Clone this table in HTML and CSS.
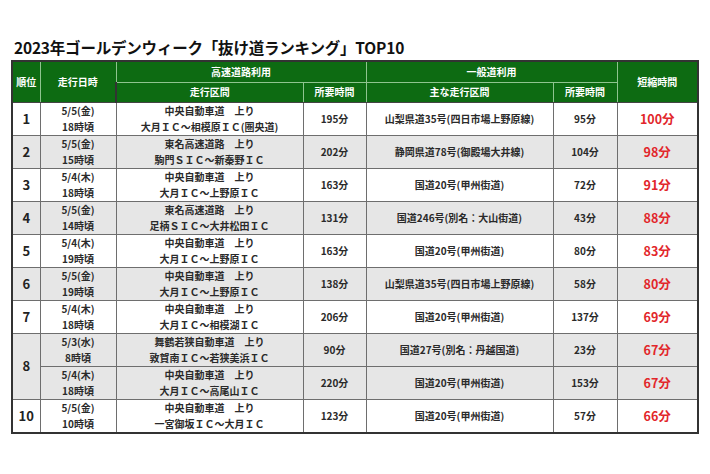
FILE: index.html
```html
<!DOCTYPE html>
<html lang="ja">
<head>
<meta charset="utf-8">
<title>2023年ゴールデンウィーク「抜け道ランキング」TOP10</title>
<link rel="stylesheet" href="styles.css">
</head>
<body>
<div class="page">
  <h1 class="title">2023年ゴールデンウィーク「抜け道ランキング」TOP10</h1>
  <table class="rank">
    <colgroup>
      <col class="c-rank"><col class="c-date"><col class="c-hw"><col class="c-hwt"><col class="c-rd"><col class="c-rdt"><col class="c-save">
    </colgroup>
    <thead>
      <tr class="h1r">
        <th rowspan="2">順位</th>
        <th rowspan="2">走行日時</th>
        <th colspan="2">高速道路利用</th>
        <th colspan="2">一般道利用</th>
        <th rowspan="2">短縮時間</th>
      </tr>
      <tr class="h2r">
        <th>走行区間</th>
        <th>所要時間</th>
        <th>主な走行区間</th>
        <th>所要時間</th>
      </tr>
    </thead>
    <tbody>
      <tr>
        <td class="num">1</td>
        <td>5/5(金)<br>18時頃</td>
        <td>中央自動車道　上り<br>大月ＩＣ～相模原ＩＣ(圏央道)</td>
        <td>195分</td>
        <td>山梨県道35号(四日市場上野原線)</td>
        <td>95分</td>
        <td class="save">100分</td>
      </tr>
      <tr class="alt">
        <td class="num">2</td>
        <td>5/5(金)<br>15時頃</td>
        <td>東名高速道路　上り<br>駒門ＳＩＣ～新秦野ＩＣ</td>
        <td>202分</td>
        <td>静岡県道78号(御殿場大井線)</td>
        <td>104分</td>
        <td class="save">98分</td>
      </tr>
      <tr>
        <td class="num">3</td>
        <td>5/4(木)<br>18時頃</td>
        <td>中央自動車道　上り<br>大月ＩＣ～上野原ＩＣ</td>
        <td>163分</td>
        <td>国道20号(甲州街道)</td>
        <td>72分</td>
        <td class="save">91分</td>
      </tr>
      <tr class="alt">
        <td class="num">4</td>
        <td>5/5(金)<br>14時頃</td>
        <td>東名高速道路　上り<br>足柄ＳＩＣ～大井松田ＩＣ</td>
        <td>131分</td>
        <td>国道246号(別名：大山街道)</td>
        <td>43分</td>
        <td class="save">88分</td>
      </tr>
      <tr>
        <td class="num">5</td>
        <td>5/4(木)<br>19時頃</td>
        <td>中央自動車道　上り<br>大月ＩＣ～上野原ＩＣ</td>
        <td>163分</td>
        <td>国道20号(甲州街道)</td>
        <td>80分</td>
        <td class="save">83分</td>
      </tr>
      <tr class="alt">
        <td class="num">6</td>
        <td>5/5(金)<br>19時頃</td>
        <td>中央自動車道　上り<br>大月ＩＣ～上野原ＩＣ</td>
        <td>138分</td>
        <td>山梨県道35号(四日市場上野原線)</td>
        <td>58分</td>
        <td class="save">80分</td>
      </tr>
      <tr>
        <td class="num">7</td>
        <td>5/4(木)<br>18時頃</td>
        <td>中央自動車道　上り<br>大月ＩＣ～相模湖ＩＣ</td>
        <td>206分</td>
        <td>国道20号(甲州街道)</td>
        <td>137分</td>
        <td class="save">69分</td>
      </tr>
      <tr class="alt">
        <td class="num" rowspan="2">8</td>
        <td>5/3(水)<br>8時頃</td>
        <td>舞鶴若狭自動車道　上り<br>敦賀南ＩＣ～若狭美浜ＩＣ</td>
        <td>90分</td>
        <td>国道27号(別名：丹越国道)</td>
        <td>23分</td>
        <td class="save">67分</td>
      </tr>
      <tr class="alt">
        <td>5/4(木)<br>18時頃</td>
        <td>中央自動車道　上り<br>大月ＩＣ～高尾山ＩＣ</td>
        <td>220分</td>
        <td>国道20号(甲州街道)</td>
        <td>153分</td>
        <td class="save">67分</td>
      </tr>
      <tr>
        <td class="num">10</td>
        <td>5/5(金)<br>10時頃</td>
        <td>中央自動車道　上り<br>一宮御坂ＩＣ～大月ＩＣ</td>
        <td>123分</td>
        <td>国道20号(甲州街道)</td>
        <td>57分</td>
        <td class="save">66分</td>
      </tr>
    </tbody>
  </table>
</div>
</body>
</html>
```
FILE: styles.css
```css
html, body {
  margin: 0;
  padding: 0;
  background: #ffffff;
}

body {
  font-family: "Noto Sans CJK JP", "Noto Sans", sans-serif;
  color: #222222;
}

.page {
  padding: 37px 0 0 11px;
}

.title {
  margin: 0 0 3px 3px;
  font-size: 15.5px;
  line-height: 20px;
  font-weight: 700;
  color: #111111;
  letter-spacing: -0.2px;
}

.rank {
  border-collapse: collapse;
  width: 686px;
  table-layout: fixed;
  border: 2px solid #333333;
}

.c-rank { width: 28px; }
.c-date { width: 76px; }
.c-hw { width: 187px; }
.c-hwt { width: 63px; }
.c-rd { width: 187px; }
.c-rdt { width: 64px; }
.c-save { width: 81px; }

.rank th {
  background: #0d6b12;
  color: #ffffff;
  font-size: 10px;
  font-weight: 700;
  border: 1px solid #8fc48f;
  padding: 0;
  line-height: 14px;
}

.rank thead tr:first-child th {
  border-top: 2px solid #333333;
}

.rank thead tr th:first-child {
  border-left: 2px solid #333333;
}

.h1r { height: 21px; }
.h2r { height: 20px; }

.rank thead tr:last-child th,
.rank thead th[rowspan="2"] {
  border-bottom: 1px solid #444444;
}

.rank td {
  border: 1px solid #6e6e6e;
  text-align: center;
  vertical-align: middle;
  font-size: 10px;
  font-weight: 700;
  line-height: 16px;
  padding: 0;
  height: 31.8px;
  color: #2a2a2a;
}

.rank tbody tr.alt td {
  background: #e6e6e6;
}

.rank td.num {
  font-size: 13px;
  color: #222222;
}

.rank td.save {
  font-size: 12.5px;
  color: #e2262b;
}
```
